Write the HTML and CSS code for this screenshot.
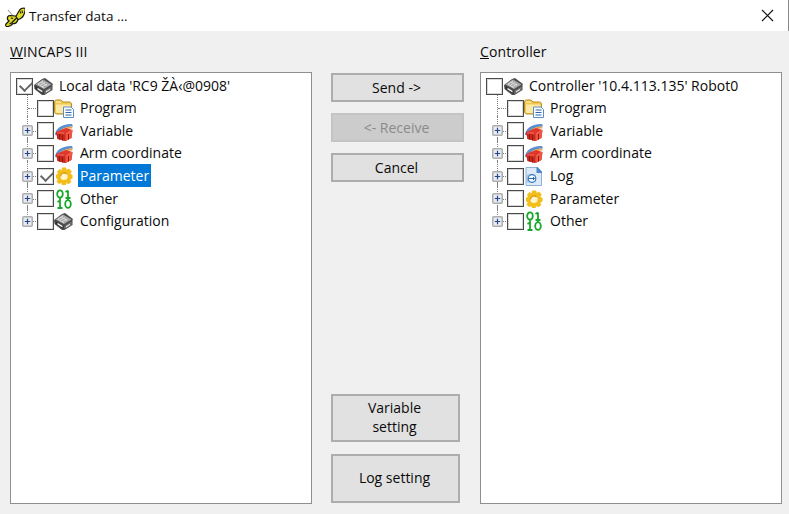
FILE: index.html
```html
<!DOCTYPE html>
<html lang="en">
<head>
<meta charset="utf-8">
<title>Transfer data ...</title>
<link rel="stylesheet" href="styles.css">
</head>
<body>
<svg class="defs" width="0" height="0" aria-hidden="true">
  <symbol id="i-drive" viewBox="0 0 20 20">
    <path d="M0 9 8 3l3-1 8 6-.5 1v5l-8 5H8L.5 13z" fill="#4d4d4d"/>
    <path d="M1.500 8.500 9 3.500l8.500 5L10 13z" fill="#a9a9a9"/>
    <path d="M4 8l5-3M6 9.500l5-3M8 11l5-3M4 8l6 4M7 6l6 3.500" stroke="#e2e2e2" stroke-width=".8"/>
    <path d="M1.500 10 9.500 15v3l-8-5z" fill="#2f2f2f"/>
    <path d="M10.500 15l7-4.500v3.500l-7 4z" fill="#777"/>
    <path d="M3.500 11.800l5 3v1.600l-5-3z" fill="#f0f0f0"/>
    <path d="M12 15.200l4-2.500v1.400l-4 2.500z" fill="#e8e8e8"/>
  </symbol>
  <symbol id="i-folder" viewBox="0 0 20 20">
    <path d="M.5 4C.5 2.800 1.500 2 2.500 2h4.500l2 2h6.500c1.200 0 2 .8 2 2v10H3c-1.500 0-2.500-1-2.500-2.500z" fill="#f2c94f" stroke="#b98b23"/>
    <path d="M2 6.500h14.500V15H3.500c-1 0-1.500-.5-1.500-1.500z" fill="#fde9a3"/>
    <path d="M2 4h5" stroke="#fff3c4"/>
    <path d="M9.500 9h7.500l2.500 2.500v8h-10z" fill="#fff" stroke="#5b8cc6"/>
    <path d="M11.500 12h6M11.500 14.500h6M11.500 17h6" stroke="#2a66b2" stroke-width="1.200"/>
  </symbol>
  <symbol id="i-var" viewBox="0 0 20 20">
    <path d="M1 14C1 8 8 2.500 18 3l1 2.500C12 5 5 9 4 14z" fill="#5b8fce"/>
    <path d="M4 13C5 9 11 5.500 18 5.500l.5 2C13 7.500 8 9.500 7 13z" fill="#eaa253"/>
    <path d="M2 11l10-4 6.500 2-1 8-6 3-8-2z" fill="#e0372a"/>
    <path d="M2 11l9.500 3v6l-8-2z" fill="#c9281d"/>
    <path d="M11.500 14l7-5-1 8-6 3z" fill="#ee5442"/>
    <path d="M5.500 13v5.500M8.500 14v5.500M14.500 13v5.500" stroke="#8e1a12"/>
    <path d="M3 12h7M12 13l6-4" stroke="#f08a7c" stroke-width=".7"/>
  </symbol>
  <symbol id="i-gear" viewBox="0 0 20 20">
    <path d="M8 2h4l.7 2.300 2.400-1 2.700 2.800-1.500 2.100L18.500 9.500v3.600l-2.200 1 1 2.300-2.800 2.300-2-1.300-1 2.100H8l-.8-2.100-2.200 1-2.500-2.500 1.300-2.100L2 12.800V9.200L4 8.300 3 6.200 5.600 3.500l2 1.200z" fill="#f2be1a" transform="translate(0 -.5)"/>
    <circle cx="10" cy="10.500" r="3.600" fill="#fff4cc"/>
    <path d="M6.500 10.500a3.500 3.500 0 0 1 6-2.500" stroke="#d5950c" stroke-width="1.200" fill="none"/>
  </symbol>
  <symbol id="i-bits" viewBox="0 0 20 20">
    <g fill="none" stroke="#17a82a" stroke-width="1.800">
      <ellipse cx="6" cy="5" rx="2.800" ry="3.700"/>
      <path d="M6 9v2.500M14 1.500v7.500M11.500 3l2.500-1.500M11.500 9h5M6 11.500v7.500M3.500 13 6 11.500M3.500 19h5M14 9v2"/>
      <ellipse cx="14" cy="15" rx="2.800" ry="3.900"/>
    </g>
  </symbol>
  <symbol id="i-log" viewBox="0 0 20 20">
    <path d="M2 1.500h10.500l5 4.500v13.500H2z" fill="#dde9f6" stroke="#8db0d7"/>
    <path d="M12.500 1h1l4.500 4.500V7h-5.500z" fill="#4f88ca"/>
    <path d="M2 9a9 5 0 0 1 10 0v7a9 5 0 0 1-10 0z" fill="#a9c8e8"/>
    <circle cx="8" cy="12.500" r="3.800" fill="#f6fafd" stroke="#3577bd" stroke-width="1.200"/>
    <path d="M5 12.500h5.500L9 11M10.500 12.500 9 14" stroke="#2a66b2" fill="none"/>
  </symbol>
  <symbol id="i-plus" viewBox="0 0 11 11">
    <rect x=".75" y=".75" width="9.500" height="9.500" rx="1" fill="#e9ebf2" stroke="#aeaeae" stroke-width="1.500"/>
    <path d="M2.800 5.500h5.400M5.500 2.800v5.400" stroke="#24468a" stroke-width="1.200"/>
  </symbol>
</svg>

<div class="dialog">
  <header class="titlebar">
    <svg class="app-icon" viewBox="0 0 22 22" width="22" height="22" aria-hidden="true">
      <path d="M5 5l6 7" stroke="#8c8c8c"/>
      <path d="M12 13 16 6c1-2 3-3 5-3 2 .5 1 3 .5 5-.8 3-3 5.500-6 6.500z" fill="#e3de28" stroke="#17170c" stroke-width="1.200"/>
      <path d="M12.500 11 7 10.500C5 10.500 4 12 4.500 14.500L6 16 3 19c-1 1.500 0 3 2 2.500l3-1 2-2c2 .5 4-1 5-4z" fill="#d9d426" stroke="#17170c" stroke-width="1.200"/>
      <path d="M8.500 18 14 12.500M17 6.500l1 2M19 5.500l.5 2.500M8 13l2 .5M6.500 19l2-1" stroke="#17170c" stroke-width="1.100"/>
    </svg>
    <span class="title">Transfer data ...</span>
    <svg class="close" viewBox="0 0 13 13" width="13" height="13" aria-hidden="true">
      <path d="M1 1l11 11M12 1 1 12" stroke="#111" stroke-width="1.100"/>
    </svg>
  </header>

  <main class="content">
    <section class="pane">
      <h2 class="pane-label"><u>W</u>INCAPS III</h2>
      <div class="tree">
        <div class="root">
          <span class="cb checked"></span>
          <svg class="root-icon"><use href="#i-drive"/></svg>
          <span class="label">Local data 'RC9 ŽÀ‹@0908'</span>
        </div>
        <ul class="children">
          <li class="node leaf"><span class="exp"></span><span class="cb"></span><svg class="icon"><use href="#i-folder"/></svg><span class="label">Program</span></li>
          <li class="node"><svg class="exp"><use href="#i-plus"/></svg><span class="cb"></span><svg class="icon"><use href="#i-var"/></svg><span class="label">Variable</span></li>
          <li class="node"><svg class="exp"><use href="#i-plus"/></svg><span class="cb"></span><svg class="icon"><use href="#i-var"/></svg><span class="label">Arm coordinate</span></li>
          <li class="node"><svg class="exp"><use href="#i-plus"/></svg><span class="cb checked"></span><svg class="icon"><use href="#i-gear"/></svg><span class="label selected">Parameter</span></li>
          <li class="node"><svg class="exp"><use href="#i-plus"/></svg><span class="cb"></span><svg class="icon"><use href="#i-bits"/></svg><span class="label">Other</span></li>
          <li class="node last"><svg class="exp"><use href="#i-plus"/></svg><span class="cb"></span><svg class="icon"><use href="#i-drive"/></svg><span class="label">Configuration</span></li>
        </ul>
      </div>
    </section>

    <section class="actions">
      <div class="action-group">
        <button class="btn">Send -&gt;</button>
        <button class="btn" disabled>&lt;- Receive</button>
        <button class="btn">Cancel</button>
      </div>
      <div class="settings-group">
        <button class="btn tall">Variable<br>setting</button>
        <button class="btn tall">Log setting</button>
      </div>
    </section>

    <section class="pane">
      <h2 class="pane-label"><u>C</u>ontroller</h2>
      <div class="tree">
        <div class="root">
          <span class="cb"></span>
          <svg class="root-icon"><use href="#i-drive"/></svg>
          <span class="label">Controller '10.4.113.135' Robot0</span>
        </div>
        <ul class="children">
          <li class="node leaf"><span class="exp"></span><span class="cb"></span><svg class="icon"><use href="#i-folder"/></svg><span class="label">Program</span></li>
          <li class="node"><svg class="exp"><use href="#i-plus"/></svg><span class="cb"></span><svg class="icon"><use href="#i-var"/></svg><span class="label">Variable</span></li>
          <li class="node"><svg class="exp"><use href="#i-plus"/></svg><span class="cb"></span><svg class="icon"><use href="#i-var"/></svg><span class="label">Arm coordinate</span></li>
          <li class="node"><svg class="exp"><use href="#i-plus"/></svg><span class="cb"></span><svg class="icon"><use href="#i-log"/></svg><span class="label">Log</span></li>
          <li class="node"><svg class="exp"><use href="#i-plus"/></svg><span class="cb"></span><svg class="icon"><use href="#i-gear"/></svg><span class="label">Parameter</span></li>
          <li class="node last"><svg class="exp"><use href="#i-plus"/></svg><span class="cb"></span><svg class="icon"><use href="#i-bits"/></svg><span class="label">Other</span></li>
        </ul>
      </div>
    </section>
  </main>
</div>
</body>
</html>
```
FILE: styles.css
```css
* { box-sizing: border-box; }
html, body { margin: 0; height: 100%; }
body {
  background: #f0f0f0;
  font-family: "Open Sans", "Noto Sans", sans-serif;
  font-size: 14px;
  color: #0a0a0a;
  overflow: hidden;
}
.defs { position: absolute; }
.dialog { height: 514px; display: flex; flex-direction: column; }

.titlebar {
  height: 31px;
  background: #fff;
  display: flex;
  align-items: center;
  padding-left: 3px;
  border-right: 1px solid #8a8a8a;
}
.app-icon { flex: none; }
.title { margin-left: 4px; font-size: 13.5px; }
.close { margin-left: auto; margin-right: 14px; }

.content {
  flex: 1;
  display: flex;
  padding: 0 7px 10px 10px;
  align-items: stretch;
}
.pane { width: 302px; display: flex; flex-direction: column; }
.pane-label {
  margin: 0;
  height: 41px;
  padding-top: 11px;
  font-size: 14px;
  font-weight: 400;
  line-height: 20px;
  letter-spacing: .1px;
}
.tree {
  flex: 1;
  background: #fff;
  border: 1px solid #8e8e8e;
  padding: 4px 0 0 5px;
}
.root { display: flex; align-items: center; height: 18px; }
.root-icon { width: 20px; height: 20px; flex: none; margin-left: 1px; }
.root .label { margin-left: 5px; margin-top: -2px; }
.children { list-style: none; margin: 2px 0 0; padding: 0; }
.node {
  position: relative;
  display: flex;
  align-items: center;
  height: 22.6px;
  padding-left: 6px;
}
.node::before {
  content: "";
  position: absolute;
  left: 11px;
  top: -4px;
  bottom: 0;
  border-left: 1px dotted #808080;
}
.node.last::before { bottom: 50%; }
.node::after {
  content: "";
  position: absolute;
  left: 12px;
  width: 10px;
  top: 50%;
  border-top: 1px dotted #808080;
}
.exp { width: 11px; height: 11px; flex: none; position: relative; z-index: 1; }
.cb {
  flex: none;
  width: 17px;
  height: 17px;
  background: #fff;
  border: 1px solid #4a4a4a;
  box-shadow: inset 0 0 0 1px #d8d8d8;
  position: relative;
  z-index: 1;
}
.exp + .cb { margin-left: 4px; }
.cb.checked::after {
  content: "";
  position: absolute;
  left: 3px;
  top: 1px;
  width: 10px;
  height: 6px;
  border-left: 2px solid #666;
  border-bottom: 2px solid #666;
  transform: translate(0, 1px) rotate(-45deg);
}
.icon { width: 20px; height: 20px; flex: none; position: relative; z-index: 1; }
.node .label { margin: -1px 0 0 4px; padding: 0 2px; line-height: 23px; }
.label { white-space: nowrap; }
.label.selected { background: #0078d7; color: #fff; }

.actions {
  width: 168px;
  padding: 42px 0 1px 19px;
  display: flex;
  flex-direction: column;
  justify-content: space-between;
}
.action-group { display: flex; flex-direction: column; gap: 11px; }
.settings-group { display: flex; flex-direction: column; gap: 12px; }
.btn {
  width: 133px;
  height: 29px;
  padding: 0 2px 0 0;
  background: #e1e1e1;
  border: 2px solid #adadad;
  font: inherit;
  color: #0a0a0a;
}
.btn:disabled { background: #cccccc; border-color: #c4c4c4; color: #8a8a8a; }
.btn.tall { width: 129px; height: 49px; line-height: 19px; padding-bottom: 3px; }
.settings-group .btn:first-child { height: 48px; }
```
